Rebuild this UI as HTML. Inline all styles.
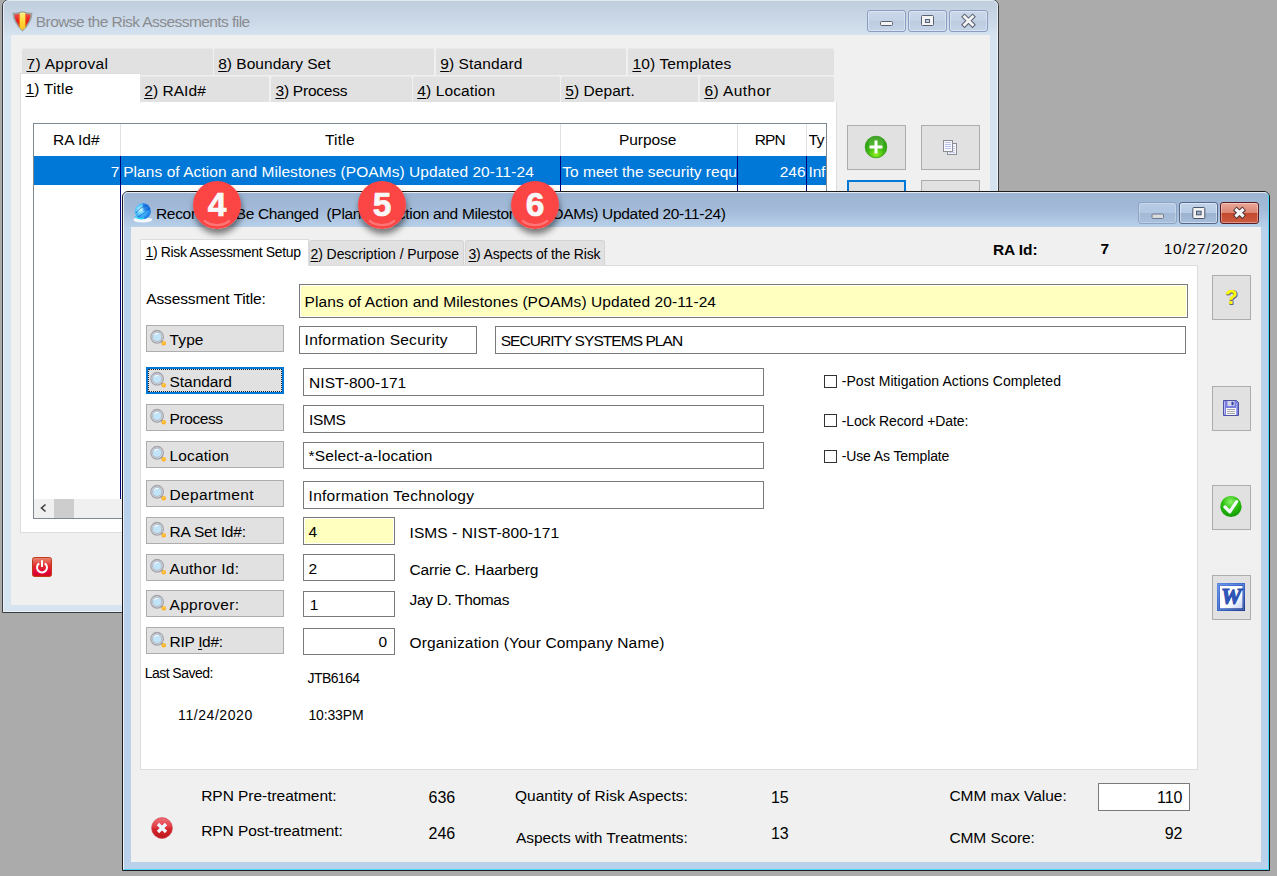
<!DOCTYPE html><html><head><meta charset="utf-8"><title>Risk Assessment</title><style>html,body{margin:0;padding:0}body{width:1277px;height:876px;overflow:hidden;background:#ababab;position:relative;font-family:'Liberation Sans', sans-serif}body div,body svg{position:absolute}.t{font-family:'Liberation Sans', sans-serif}u{text-decoration:underline;text-decoration-thickness:1px;text-underline-offset:2px}</style></head><body>
<div id="bw" style="left:2px;top:-1px;width:997px;height:614px;border:1px solid #3c3c3c;border-radius:7px 7px 0 0;box-sizing:border-box;background:#d6e3f1;overflow:hidden">
<div style="left:0;top:0;width:995px;height:36px;background:linear-gradient(#bfcddc 0%,#c7d5e4 45%,#d6e3f1 100%)"></div><div style="left:0;top:0;width:995px;height:612px;box-sizing:border-box;border:1px solid rgba(255,255,255,.55);border-radius:6px 6px 0 0"></div>
</div>
<div style="left:11px;top:35px;width:979px;height:570px;background:#f0f0f0"></div>
<svg style="left:12px;top:10.600px" width="21" height="21" viewBox="0 0 21 21"><defs><linearGradient id="sy" x1="0" y1="0" x2="0" y2="1"><stop offset="0" stop-color="#fff08a"/><stop offset=".5" stop-color="#ffd83a"/><stop offset="1" stop-color="#ffc020"/></linearGradient><linearGradient id="sr" x1="0" y1="0" x2="0" y2="1"><stop offset="0" stop-color="#f45a5a"/><stop offset=".5" stop-color="#e81818"/><stop offset="1" stop-color="#c80808"/></linearGradient></defs><path d="M1.5 2.5 Q6 2.8 10.5 1 Q15 2.8 19.5 2.5 Q19.5 11 10.5 19.5 Q1.5 11 1.5 2.5Z" fill="url(#sr)" stroke="#9aa3a0" stroke-width="1.700"/><path d="M7.5 2.2 Q9.5 1.8 10.5 1.2 Q11.5 1.8 13.5 2.2 L13.5 16.5 L10.5 19.3 L7.5 16.5Z" fill="url(#sy)"/><path d="M7.2 2.5V16" stroke="#f07010" stroke-width=".8"/><path d="M13.8 2.5V16" stroke="#f07010" stroke-width=".8"/></svg>
<div id="t0" class="t" style="top:12px;font-size:15.5px;line-height:20px;color:#8a8c90;white-space:nowrap;letter-spacing:-0.559px;left:35.80px;">Browse the Risk Assessments file</div>
<div style="left:867px;top:10px;width:39px;height:22px;box-sizing:border-box;border:1px solid #8a9cc0;border-radius:3px;background:linear-gradient(#cbd8ea 0%,#c4d2e6 48%,#bccbe0 52%,#c6d4e8 100%);box-shadow:inset 0 0 0 1px rgba(255,255,255,.35)"></div>
<div style="left:908px;top:10px;width:39px;height:22px;box-sizing:border-box;border:1px solid #8a9cc0;border-radius:3px;background:linear-gradient(#cbd8ea 0%,#c4d2e6 48%,#bccbe0 52%,#c6d4e8 100%);box-shadow:inset 0 0 0 1px rgba(255,255,255,.35)"></div>
<div style="left:949px;top:10px;width:39px;height:22px;box-sizing:border-box;border:1px solid #8a9cc0;border-radius:3px;background:linear-gradient(#cbd8ea 0%,#c4d2e6 48%,#bccbe0 52%,#c6d4e8 100%);box-shadow:inset 0 0 0 1px rgba(255,255,255,.35)"></div>
<svg style="left:867px;top:10px" width="121" height="22" viewBox="0 0 121 22"><rect x="13.5" y="11.5" width="12" height="4" rx="1" fill="#f4f4f4" stroke="#5a6170" stroke-width="1"/><rect x="54.500" y="5.5" width="12" height="10" rx="1" fill="#f4f4f4" stroke="#5a6170"/><rect x="58.5" y="9.5" width="4" height="3" fill="#c4d2e6" stroke="#5a6170"/><path d="M97.500 6.800 L105.500 14.800 M105.500 6.800 L97.500 14.800" stroke="#5a6170" stroke-width="4.8" stroke-linecap="square"/><path d="M97.500 6.800 L105.500 14.800 M105.500 6.800 L97.500 14.800" stroke="#f4f4f4" stroke-width="2.8" stroke-linecap="square"/></svg>
<div style="left:22px;top:48px;width:190.5px;height:27px;background:#e1e1e1;border-radius:3px 3px 0 0;box-shadow:inset 0 1px 0 #e8e8e8"></div>
<div id="t1" class="t" style="top:54px;font-size:15.5px;line-height:20px;color:#000;white-space:nowrap;letter-spacing:0.298px;left:26.50px;"><u>7</u>) Approval</div>
<div style="left:214px;top:48px;width:220.3px;height:27px;background:#e1e1e1;border-radius:3px 3px 0 0;box-shadow:inset 0 1px 0 #e8e8e8"></div>
<div id="t2" class="t" style="top:54px;font-size:15.5px;line-height:20px;color:#000;white-space:nowrap;letter-spacing:0.026px;left:218.20px;"><u>8</u>) Boundary Set</div>
<div style="left:436.2px;top:48px;width:190.3px;height:27px;background:#e1e1e1;border-radius:3px 3px 0 0;box-shadow:inset 0 1px 0 #e8e8e8"></div>
<div id="t3" class="t" style="top:54px;font-size:15.5px;line-height:20px;color:#000;white-space:nowrap;letter-spacing:0.108px;left:440.20px;"><u>9</u>) Standard</div>
<div style="left:628.2px;top:48px;width:206.3px;height:27px;background:#e1e1e1;border-radius:3px 3px 0 0;box-shadow:inset 0 1px 0 #e8e8e8"></div>
<div id="t4" class="t" style="top:54px;font-size:15.5px;line-height:20px;color:#000;white-space:nowrap;letter-spacing:0.152px;left:632.40px;"><u>1</u>0) Templates</div>
<div style="left:20px;top:102px;width:817px;height:431px;background:#fff;box-sizing:border-box;border:1px solid #dcdcdc;border-top:none"></div>
<div style="left:141px;top:75.5px;width:128.4px;height:26.5px;background:#e1e1e1;border-radius:3px 3px 0 0;box-shadow:inset 0 1px 0 #e8e8e8"></div>
<div id="t5" class="t" style="top:81px;font-size:15.5px;line-height:20px;color:#000;white-space:nowrap;letter-spacing:0.059px;left:144.20px;"><u>2</u>) RAId#</div>
<div style="left:270.8px;top:75.5px;width:140.8px;height:26.5px;background:#e1e1e1;border-radius:3px 3px 0 0;box-shadow:inset 0 1px 0 #e8e8e8"></div>
<div id="t6" class="t" style="top:81px;font-size:15.5px;line-height:20px;color:#000;white-space:nowrap;letter-spacing:-0.244px;left:275.50px;"><u>3</u>) Process</div>
<div style="left:413px;top:75.5px;width:146.5px;height:26.5px;background:#e1e1e1;border-radius:3px 3px 0 0;box-shadow:inset 0 1px 0 #e8e8e8"></div>
<div id="t7" class="t" style="top:81px;font-size:15.5px;line-height:20px;color:#000;white-space:nowrap;letter-spacing:0.130px;left:417.20px;"><u>4</u>) Location</div>
<div style="left:561.2px;top:75.5px;width:137.2px;height:26.5px;background:#e1e1e1;border-radius:3px 3px 0 0;box-shadow:inset 0 1px 0 #e8e8e8"></div>
<div id="t8" class="t" style="top:81px;font-size:15.5px;line-height:20px;color:#000;white-space:nowrap;letter-spacing:0.074px;left:565.20px;"><u>5</u>) Depart.</div>
<div style="left:700.4px;top:75.5px;width:134.1px;height:26.5px;background:#e1e1e1;border-radius:3px 3px 0 0;box-shadow:inset 0 1px 0 #e8e8e8"></div>
<div id="t9" class="t" style="top:81px;font-size:15.5px;line-height:20px;color:#000;white-space:nowrap;letter-spacing:0.449px;left:704.40px;"><u>6</u>) Author</div>
<div style="left:20px;top:73px;width:121px;height:30px;background:#fff;box-sizing:border-box;border:1px solid #dcdcdc;border-bottom:none;border-right-color:#e4e4e4"></div>
<div id="t10" class="t" style="top:79px;font-size:15.5px;line-height:20px;color:#000;white-space:nowrap;letter-spacing:0.181px;left:25.50px;"><u>1</u>) Title</div>
<div style="left:33px;top:123px;width:794px;height:396px;background:#fff;box-sizing:border-box;border:1px solid #7f8791"></div>
<div style="left:120px;top:124px;width:1px;height:32px;background:#e2e2e2"></div>
<div style="left:120px;top:156px;width:1px;height:343px;background:#00007a"></div>
<div style="left:560px;top:124px;width:1px;height:32px;background:#e2e2e2"></div>
<div style="left:560px;top:156px;width:1px;height:343px;background:#00007a"></div>
<div style="left:737px;top:124px;width:1px;height:32px;background:#e2e2e2"></div>
<div style="left:737px;top:156px;width:1px;height:343px;background:#00007a"></div>
<div style="left:806px;top:124px;width:1px;height:32px;background:#e2e2e2"></div>
<div style="left:806px;top:156px;width:1px;height:343px;background:#00007a"></div>
<div style="left:34px;top:156px;width:792px;height:29px;background:#0078d7"></div>
<div style="left:120px;top:156px;width:1px;height:29px;background:#00007a"></div>
<div style="left:560px;top:156px;width:1px;height:29px;background:#00007a"></div>
<div style="left:737px;top:156px;width:1px;height:29px;background:#00007a"></div>
<div style="left:806px;top:156px;width:1px;height:29px;background:#00007a"></div>
<div id="t11" class="t" style="top:130px;font-size:15.5px;line-height:20px;color:#000;white-space:nowrap;letter-spacing:-0.006px;left:53.10px;">RA Id#</div>
<div id="t12" class="t" style="top:130px;font-size:15.5px;line-height:20px;color:#000;white-space:nowrap;letter-spacing:0.245px;left:324.90px;">Title</div>
<div id="t13" class="t" style="top:130px;font-size:15.5px;line-height:20px;color:#000;white-space:nowrap;letter-spacing:-0.039px;left:618.90px;">Purpose</div>
<div id="t14" class="t" style="top:130px;font-size:15.5px;line-height:20px;color:#000;white-space:nowrap;letter-spacing:-0.917px;left:754.70px;">RPN</div>
<div id="t15" class="t" style="top:130px;font-size:15.5px;line-height:20px;color:#000;white-space:nowrap;left:808.60px;width:17.5px;overflow:hidden;letter-spacing:-.5px;">Ty</div>
<div id="t16" class="t" style="top:162px;font-size:15.5px;line-height:20px;color:#fff;white-space:nowrap;left:110.70px;">7</div>
<div id="t17" class="t" style="top:162px;font-size:15.5px;line-height:20px;color:#fff;white-space:nowrap;letter-spacing:0.062px;left:123.20px;">Plans of Action and Milestones (POAMs) Updated 20-11-24</div>
<div id="t18" class="t" style="top:162px;font-size:15.5px;line-height:20px;color:#fff;white-space:nowrap;letter-spacing:0.032px;left:562.20px;">To meet the security requ</div>
<div id="t19" class="t" style="top:162px;font-size:15.5px;line-height:20px;color:#fff;white-space:nowrap;right:471.40px;">246</div>
<div id="t20" class="t" style="top:162px;font-size:15.5px;line-height:20px;color:#fff;white-space:nowrap;left:808.60px;width:17.3px;overflow:hidden;letter-spacing:-.2px;">Inf</div>
<div style="left:34px;top:499px;width:792px;height:19px;background:#f0f0f0"></div>
<div style="left:54px;top:499px;width:20px;height:19px;background:#cdcdcd"></div>
<svg style="left:38px;top:502px" width="12" height="12" viewBox="0 0 12 12"><path d="M7.5 2.5 L3.500 6 L7.5 9.5" fill="none" stroke="#404040" stroke-width="1.6"/></svg>
<div style="left:847px;top:125px;width:59px;height:45px;box-sizing:border-box;border:1px solid #adadad;background:#e1e1e1"></div>
<div style="left:921px;top:125px;width:59px;height:45px;box-sizing:border-box;border:1px solid #adadad;background:#e1e1e1"></div>
<div style="left:847px;top:180px;width:59px;height:45px;box-sizing:border-box;border:2px solid #0078d7;background:#e1e1e1"></div>
<div style="left:921px;top:180px;width:59px;height:45px;box-sizing:border-box;border:1px solid #adadad;background:#e1e1e1"></div>
<svg style="left:864px;top:135px" width="24" height="24" viewBox="0 0 24 24"><defs><radialGradient id="gp" cx=".5" cy=".85" r=".9"><stop offset="0" stop-color="#8cf01c"/><stop offset=".45" stop-color="#3cb414"/><stop offset="1" stop-color="#2a9410"/></radialGradient></defs><circle cx="12" cy="12" r="10.800" fill="url(#gp)" stroke="#2e9a14" stroke-width=".8"/><ellipse cx="12" cy="7" rx="8" ry="5" fill="#fff" opacity=".12"/><path d="M12 5.500V18.500M5.500 12H18.500" stroke="#fff" stroke-width="3"/></svg>
<svg style="left:942px;top:139px" width="17" height="17" viewBox="0 0 17 17"><rect x="5.500" y="4.500" width="9" height="11" fill="#f4f6fc" stroke="#8c8c94"/><path d="M7 7.500h6M7 9.500h6M7 11.500h6M7 13.500h6" stroke="#c4ccf0"/><rect x="1.500" y="1.500" width="9" height="11" fill="#f8f9fe" stroke="#8c8c94"/><path d="M3 3.500h6M3 5.500h6M3 7.500h6M3 9.500h6" stroke="#b8c2ee"/></svg>
<svg style="left:32px;top:557px" width="20" height="20" viewBox="0 0 20 20"><defs><linearGradient id="pw" x1="0" y1="0" x2="0" y2="1"><stop offset="0" stop-color="#e88a72"/><stop offset=".45" stop-color="#e22a2c"/><stop offset=".85" stop-color="#e0003c"/><stop offset="1" stop-color="#c81808"/></linearGradient></defs><rect x=".5" y=".5" width="19" height="19" rx="2" fill="url(#pw)" stroke="#c43a18"/><path d="M7.200 6.300 A5 5 0 1 0 12.800 6.300" fill="none" stroke="#fff" stroke-width="2"/><path d="M10 3.300V10" stroke="#fff" stroke-width="2"/></svg>
<div id="fw" style="left:122px;top:191px;width:1148px;height:680px;border:1px solid #1c1c1c;border-radius:6px 6px 0 0;box-sizing:border-box;background:#b9d1ea;overflow:hidden;box-shadow:0 0 0 0 #000">
<div style="left:0;top:0;width:1146px;height:36px;background:linear-gradient(#9bb4d2 0%,#a3bbd8 50%,#b9d1ea 100%)"></div>
<div style="left:0;top:0;width:1146px;height:678px;box-sizing:border-box;border:1px solid rgba(255,255,255,.75);border-right-color:#4cd8f8;border-bottom-color:#4cd8f8;border-radius:5px 5px 0 0"></div>
</div>
<div style="left:131px;top:227px;width:1130px;height:635px;background:#f0f0f0"></div>
<svg style="left:132px;top:201px" width="22" height="23" viewBox="0 0 22 23"><defs><radialGradient id="gl" cx=".35" cy=".4" r=".7"><stop offset="0" stop-color="#d0fbff"/><stop offset=".4" stop-color="#58c8fc"/><stop offset="1" stop-color="#0c6ce4"/></radialGradient></defs><ellipse cx="10.800" cy="18.800" rx="9.500" ry="2.600" fill="#f4faff"/><circle cx="10.800" cy="10.300" r="8" fill="url(#gl)"/><path d="M10.800 2.300 A8 8 0 0 1 18.600 8.500 L11.500 10 Z" fill="#0858d8" opacity=".55"/><path d="M4 12 Q8 6 15 4.500 M6 16 Q12 13 17.500 7" stroke="#0848c0" stroke-width="1" fill="none" opacity=".6"/><path d="M3 15.500 Q7 19 12 17" stroke="#28d8f8" stroke-width="1.600" fill="none"/></svg>
<div id="t21" class="t" style="top:204px;font-size:15.5px;line-height:20px;color:#000;white-space:nowrap;letter-spacing:-0.325px;left:156.00px;white-space:pre;">Record Will Be Changed  (Plans of Action and Milestones (POAMs) Updated 20-11-24)</div>
<div style="left:1138px;top:202px;width:38.5px;height:21.6px;box-sizing:border-box;border:1px solid #8ea4c4;border-radius:3px;background:linear-gradient(#b6cbe5 0%,#b2c8e2 48%,#a3bad6 52%,#a9c0dc 100%);box-shadow:inset 0 0 0 1px rgba(255,255,255,.25)"></div>
<div style="left:1179px;top:202px;width:38.5px;height:21.6px;box-sizing:border-box;border:1px solid #56688a;border-radius:3px;background:linear-gradient(#c0d3ea 0%,#b8cce6 48%,#9cb3d0 52%,#a6bedb 100%);box-shadow:inset 0 0 0 1px rgba(255,255,255,.45)"></div>
<div style="left:1220px;top:202px;width:39px;height:21.6px;box-sizing:border-box;border:1px solid #5a1c24;border-radius:3px;background:linear-gradient(#eaa898 0%,#dc8674 48%,#c3482e 52%,#cc5c40 100%);box-shadow:inset 0 0 0 1px rgba(255,255,255,.35)"></div>
<svg style="left:1138px;top:202px" width="122" height="22" viewBox="0 0 122 22"><rect x="14" y="12" width="11.500" height="4.500" rx="1" fill="#dcdcdc" stroke="#6a7890" stroke-width="1"/><rect x="54.800" y="5.500" width="12" height="11" rx="1" fill="#f2f2f2" stroke="#4a5468"/><rect x="58.500" y="9.200" width="4.600" height="3.600" fill="#9cb3d0" stroke="#4a5468"/><path d="M96.800 6.500 L106.200 15.100 M106.200 6.500 L96.800 15.100" stroke="#4a3034" stroke-width="5.200" stroke-linecap="butt"/><path d="M97.400 7.050 L105.600 14.550 M105.600 7.050 L97.400 14.550" stroke="#f6f6f6" stroke-width="3.200" stroke-linecap="butt"/></svg>
<div id="t22" class="t" style="top:240px;font-size:15.5px;line-height:20px;color:#000;white-space:nowrap;letter-spacing:-0.092px;font-weight:bold;left:993.00px;">RA Id:</div>
<div id="t23" class="t" style="top:239px;font-size:15.5px;line-height:20px;color:#000;white-space:nowrap;font-weight:bold;left:1100.50px;">7</div>
<div id="t24" class="t" style="top:239px;font-size:15.5px;line-height:20px;color:#000;white-space:nowrap;letter-spacing:0.702px;left:1163.70px;">10/27/2020</div>
<div style="left:140px;top:265px;width:1058px;height:505px;background:#fff;box-sizing:border-box;border:1px solid #dcdcdc"></div>
<div style="left:308.5px;top:240.3px;width:155.0px;height:24.7px;background:#e1e1e1;box-sizing:border-box;border:1px solid #d4d4d4;border-bottom:none;border-radius:3px 3px 0 0"></div>
<div style="left:464.5px;top:240.3px;width:140.3px;height:24.7px;background:#e1e1e1;box-sizing:border-box;border:1px solid #d4d4d4;border-bottom:none;border-radius:3px 3px 0 0"></div>
<div style="left:140px;top:238.5px;width:169px;height:27.5px;background:#fff;box-sizing:border-box;border:1px solid #dcdcdc;border-bottom:none"></div>
<div id="t25" class="t" style="top:242px;font-size:14px;line-height:20px;color:#000;white-space:nowrap;letter-spacing:-0.340px;left:145.50px;"><u>1</u>) Risk Assessment Setup</div>
<div id="t26" class="t" style="top:244px;font-size:14px;line-height:20px;color:#000;white-space:nowrap;letter-spacing:-0.074px;left:310.50px;"><u>2</u>) Description / Purpose</div>
<div id="t27" class="t" style="top:244px;font-size:14px;line-height:20px;color:#000;white-space:nowrap;letter-spacing:-0.153px;left:468.40px;"><u>3</u>) Aspects of the Risk</div>
<div id="t28" class="t" style="top:289px;font-size:15.5px;line-height:20px;color:#000;white-space:nowrap;letter-spacing:-0.111px;left:146.20px;">Assessment Title:</div>
<div style="left:299px;top:284.3px;width:889.2px;height:33.4px;box-sizing:border-box;border:1px solid #7a7a7a;background:#ffffc0;box-shadow:inset 0 0 0 1px #fff"></div>
<div id="t29" class="t" style="top:292px;font-size:15.5px;line-height:20px;color:#000;white-space:nowrap;letter-spacing:0.077px;left:304.60px;">Plans of Action and Milestones (POAMs) Updated 20-11-24</div>
<div style="left:299px;top:326px;width:178px;height:27.6px;box-sizing:border-box;border:1px solid #7a7a7a;background:#fff"></div>
<div id="t30" class="t" style="top:330px;font-size:15.5px;line-height:20px;color:#000;white-space:nowrap;letter-spacing:0.266px;left:304.60px;">Information Security</div>
<div style="left:495px;top:326px;width:691.2px;height:27.6px;box-sizing:border-box;border:1px solid #7a7a7a;background:#fff"></div>
<div id="t31" class="t" style="top:331px;font-size:15.5px;line-height:20px;color:#000;white-space:nowrap;letter-spacing:-0.943px;left:500.70px;">SECURITY SYSTEMS PLAN</div>
<div style="left:145.8px;top:325.3px;width:138.2px;height:26.5px;box-sizing:border-box;border:1px solid #adadad;background:#e1e1e1"></div>
<svg style="left:149px;top:328.1px" width="18" height="18" viewBox="0 0 18 18"><circle cx="8.100" cy="8.800" r="6.300" fill="#d8dce2" stroke="#a4a4ac" stroke-width="1.300"/><circle cx="8.100" cy="8.800" r="4.600" fill="#c2e4f8" stroke="#b0b4bc" stroke-width=".9"/><path d="M5.500 7 Q7 4.800 9.500 5.500" stroke="#fff" stroke-width="1.200" fill="none" opacity=".8"/><path d="M12.200 13 L14.500 15.200" stroke="#9c9ca4" stroke-width="2.400"/><circle cx="14.700" cy="15.300" r="2.300" fill="#ffb020"/><circle cx="14.400" cy="14.800" r="1" fill="#ffd860"/></svg>
<div id="t32" class="t" style="top:330px;font-size:15.5px;line-height:20px;color:#000;white-space:nowrap;letter-spacing:0.097px;left:169.60px;">Type</div>
<div style="left:145.8px;top:366.8px;width:138.2px;height:27.0px;box-sizing:border-box;border:2px solid #0078d7;background:#e1e1e1"></div>
<div style="left:148px;top:369.0px;width:133.8px;height:22.6px;box-sizing:border-box;border:1px dotted #222"></div>
<svg style="left:149px;top:369.8px" width="18" height="18" viewBox="0 0 18 18"><circle cx="8.100" cy="8.800" r="6.300" fill="#d8dce2" stroke="#a4a4ac" stroke-width="1.300"/><circle cx="8.100" cy="8.800" r="4.600" fill="#c2e4f8" stroke="#b0b4bc" stroke-width=".9"/><path d="M5.500 7 Q7 4.800 9.500 5.500" stroke="#fff" stroke-width="1.200" fill="none" opacity=".8"/><path d="M12.200 13 L14.500 15.200" stroke="#9c9ca4" stroke-width="2.400"/><circle cx="14.700" cy="15.300" r="2.300" fill="#ffb020"/><circle cx="14.400" cy="14.800" r="1" fill="#ffd860"/></svg>
<div id="t33" class="t" style="top:372px;font-size:15.5px;line-height:20px;color:#000;white-space:nowrap;letter-spacing:-0.075px;left:169.60px;">Standard</div>
<div style="left:145.8px;top:404.4px;width:138.2px;height:26.4px;box-sizing:border-box;border:1px solid #adadad;background:#e1e1e1"></div>
<svg style="left:149px;top:407.1px" width="18" height="18" viewBox="0 0 18 18"><circle cx="8.100" cy="8.800" r="6.300" fill="#d8dce2" stroke="#a4a4ac" stroke-width="1.300"/><circle cx="8.100" cy="8.800" r="4.600" fill="#c2e4f8" stroke="#b0b4bc" stroke-width=".9"/><path d="M5.500 7 Q7 4.800 9.500 5.500" stroke="#fff" stroke-width="1.200" fill="none" opacity=".8"/><path d="M12.200 13 L14.500 15.200" stroke="#9c9ca4" stroke-width="2.400"/><circle cx="14.700" cy="15.300" r="2.300" fill="#ffb020"/><circle cx="14.400" cy="14.800" r="1" fill="#ffd860"/></svg>
<div id="t34" class="t" style="top:409px;font-size:15.5px;line-height:20px;color:#000;white-space:nowrap;letter-spacing:-0.433px;left:169.60px;">Process</div>
<div style="left:145.8px;top:441px;width:138.2px;height:26.8px;box-sizing:border-box;border:1px solid #adadad;background:#e1e1e1"></div>
<svg style="left:149px;top:443.9px" width="18" height="18" viewBox="0 0 18 18"><circle cx="8.100" cy="8.800" r="6.300" fill="#d8dce2" stroke="#a4a4ac" stroke-width="1.300"/><circle cx="8.100" cy="8.800" r="4.600" fill="#c2e4f8" stroke="#b0b4bc" stroke-width=".9"/><path d="M5.500 7 Q7 4.800 9.500 5.500" stroke="#fff" stroke-width="1.200" fill="none" opacity=".8"/><path d="M12.200 13 L14.500 15.200" stroke="#9c9ca4" stroke-width="2.400"/><circle cx="14.700" cy="15.300" r="2.300" fill="#ffb020"/><circle cx="14.400" cy="14.800" r="1" fill="#ffd860"/></svg>
<div id="t35" class="t" style="top:446px;font-size:15.5px;line-height:20px;color:#000;white-space:nowrap;letter-spacing:0.113px;left:169.60px;">Location</div>
<div style="left:145.8px;top:479.8px;width:138.2px;height:26.8px;box-sizing:border-box;border:1px solid #adadad;background:#e1e1e1"></div>
<svg style="left:149px;top:482.7px" width="18" height="18" viewBox="0 0 18 18"><circle cx="8.100" cy="8.800" r="6.300" fill="#d8dce2" stroke="#a4a4ac" stroke-width="1.300"/><circle cx="8.100" cy="8.800" r="4.600" fill="#c2e4f8" stroke="#b0b4bc" stroke-width=".9"/><path d="M5.500 7 Q7 4.800 9.500 5.500" stroke="#fff" stroke-width="1.200" fill="none" opacity=".8"/><path d="M12.200 13 L14.500 15.200" stroke="#9c9ca4" stroke-width="2.400"/><circle cx="14.700" cy="15.300" r="2.300" fill="#ffb020"/><circle cx="14.400" cy="14.800" r="1" fill="#ffd860"/></svg>
<div id="t36" class="t" style="top:485px;font-size:15.5px;line-height:20px;color:#000;white-space:nowrap;letter-spacing:0.324px;left:169.60px;">Department</div>
<div style="left:145.8px;top:516.8px;width:138.2px;height:27.0px;box-sizing:border-box;border:1px solid #adadad;background:#e1e1e1"></div>
<svg style="left:149px;top:519.8px" width="18" height="18" viewBox="0 0 18 18"><circle cx="8.100" cy="8.800" r="6.300" fill="#d8dce2" stroke="#a4a4ac" stroke-width="1.300"/><circle cx="8.100" cy="8.800" r="4.600" fill="#c2e4f8" stroke="#b0b4bc" stroke-width=".9"/><path d="M5.500 7 Q7 4.800 9.500 5.500" stroke="#fff" stroke-width="1.200" fill="none" opacity=".8"/><path d="M12.200 13 L14.500 15.200" stroke="#9c9ca4" stroke-width="2.400"/><circle cx="14.700" cy="15.300" r="2.300" fill="#ffb020"/><circle cx="14.400" cy="14.800" r="1" fill="#ffd860"/></svg>
<div id="t37" class="t" style="top:522px;font-size:15.5px;line-height:20px;color:#000;white-space:nowrap;letter-spacing:-0.202px;left:169.60px;">RA Set Id#:</div>
<div style="left:145.8px;top:553.9px;width:138.2px;height:26.9px;box-sizing:border-box;border:1px solid #adadad;background:#e1e1e1"></div>
<svg style="left:149px;top:556.8px" width="18" height="18" viewBox="0 0 18 18"><circle cx="8.100" cy="8.800" r="6.300" fill="#d8dce2" stroke="#a4a4ac" stroke-width="1.300"/><circle cx="8.100" cy="8.800" r="4.600" fill="#c2e4f8" stroke="#b0b4bc" stroke-width=".9"/><path d="M5.500 7 Q7 4.800 9.500 5.500" stroke="#fff" stroke-width="1.200" fill="none" opacity=".8"/><path d="M12.200 13 L14.500 15.200" stroke="#9c9ca4" stroke-width="2.400"/><circle cx="14.700" cy="15.300" r="2.300" fill="#ffb020"/><circle cx="14.400" cy="14.800" r="1" fill="#ffd860"/></svg>
<div id="t38" class="t" style="top:559px;font-size:15.5px;line-height:20px;color:#000;white-space:nowrap;letter-spacing:0.242px;left:169.60px;">Author Id:</div>
<div style="left:145.8px;top:590.2px;width:138.2px;height:26.4px;box-sizing:border-box;border:1px solid #adadad;background:#e1e1e1"></div>
<svg style="left:149px;top:592.9px" width="18" height="18" viewBox="0 0 18 18"><circle cx="8.100" cy="8.800" r="6.300" fill="#d8dce2" stroke="#a4a4ac" stroke-width="1.300"/><circle cx="8.100" cy="8.800" r="4.600" fill="#c2e4f8" stroke="#b0b4bc" stroke-width=".9"/><path d="M5.500 7 Q7 4.800 9.500 5.500" stroke="#fff" stroke-width="1.200" fill="none" opacity=".8"/><path d="M12.200 13 L14.500 15.200" stroke="#9c9ca4" stroke-width="2.400"/><circle cx="14.700" cy="15.300" r="2.300" fill="#ffb020"/><circle cx="14.400" cy="14.800" r="1" fill="#ffd860"/></svg>
<div id="t39" class="t" style="top:595px;font-size:15.5px;line-height:20px;color:#000;white-space:nowrap;letter-spacing:0.275px;left:169.60px;">Approver:</div>
<div style="left:145.8px;top:627px;width:138.2px;height:26.7px;box-sizing:border-box;border:1px solid #adadad;background:#e1e1e1"></div>
<svg style="left:149px;top:629.9px" width="18" height="18" viewBox="0 0 18 18"><circle cx="8.100" cy="8.800" r="6.300" fill="#d8dce2" stroke="#a4a4ac" stroke-width="1.300"/><circle cx="8.100" cy="8.800" r="4.600" fill="#c2e4f8" stroke="#b0b4bc" stroke-width=".9"/><path d="M5.500 7 Q7 4.800 9.500 5.500" stroke="#fff" stroke-width="1.200" fill="none" opacity=".8"/><path d="M12.200 13 L14.500 15.200" stroke="#9c9ca4" stroke-width="2.400"/><circle cx="14.700" cy="15.300" r="2.300" fill="#ffb020"/><circle cx="14.400" cy="14.800" r="1" fill="#ffd860"/></svg>
<div id="t40" class="t" style="top:632px;font-size:15.5px;line-height:20px;color:#000;white-space:nowrap;letter-spacing:-0.336px;left:169.60px;">RIP <u>I</u>d#:</div>
<div style="left:303px;top:368.2px;width:461px;height:27.4px;box-sizing:border-box;border:1px solid #7a7a7a;background:#fff"></div>
<div id="t41" class="t" style="top:373px;font-size:15.5px;line-height:20px;color:#000;white-space:nowrap;letter-spacing:0.064px;left:309.00px;">NIST-800-171</div>
<div style="left:303px;top:405px;width:461px;height:27.7px;box-sizing:border-box;border:1px solid #7a7a7a;background:#fff"></div>
<div id="t42" class="t" style="top:410px;font-size:15.5px;line-height:20px;color:#000;white-space:nowrap;letter-spacing:-0.335px;left:309.00px;">ISMS</div>
<div style="left:303px;top:441.5px;width:461px;height:27.5px;box-sizing:border-box;border:1px solid #7a7a7a;background:#fff"></div>
<div id="t43" class="t" style="top:446px;font-size:15.5px;line-height:20px;color:#000;white-space:nowrap;letter-spacing:0.142px;left:308.60px;">*Select-a-location</div>
<div style="left:303px;top:481px;width:461px;height:27.5px;box-sizing:border-box;border:1px solid #7a7a7a;background:#fff"></div>
<div id="t44" class="t" style="top:486px;font-size:15.5px;line-height:20px;color:#000;white-space:nowrap;letter-spacing:0.258px;left:308.60px;">Information Technology</div>
<div style="left:303px;top:517px;width:92px;height:27.7px;box-sizing:border-box;border:1px solid #7a7a7a;background:#ffffc0;box-shadow:inset 0 0 0 1px #fff"></div>
<div id="t45" class="t" style="top:522px;font-size:15.5px;line-height:20px;color:#000;white-space:nowrap;left:308.60px;">4</div>
<div style="left:303px;top:554.3px;width:92px;height:27.2px;box-sizing:border-box;border:1px solid #7a7a7a;background:#fff"></div>
<div id="t46" class="t" style="top:559px;font-size:15.5px;line-height:20px;color:#000;white-space:nowrap;left:308.60px;">2</div>
<div style="left:303px;top:591px;width:92px;height:25.6px;box-sizing:border-box;border:1px solid #7a7a7a;background:#fff"></div>
<div id="t47" class="t" style="top:595px;font-size:15.5px;line-height:20px;color:#000;white-space:nowrap;left:309.70px;">1</div>
<div style="left:303px;top:627.8px;width:92px;height:27.7px;box-sizing:border-box;border:1px solid #7a7a7a;background:#fff"></div>
<div id="t48" class="t" style="top:632px;font-size:15.5px;line-height:20px;color:#000;white-space:nowrap;right:890.00px;">0</div>
<div id="t49" class="t" style="top:523px;font-size:15.5px;line-height:20px;color:#000;white-space:nowrap;letter-spacing:0.079px;left:409.50px;">ISMS - NIST-800-171</div>
<div id="t50" class="t" style="top:560px;font-size:15.5px;line-height:20px;color:#000;white-space:nowrap;letter-spacing:-0.120px;left:409.50px;">Carrie C. Haarberg</div>
<div id="t51" class="t" style="top:590px;font-size:15.5px;line-height:20px;color:#000;white-space:nowrap;letter-spacing:-0.338px;left:409.50px;">Jay D. Thomas</div>
<div id="t52" class="t" style="top:633px;font-size:15.5px;line-height:20px;color:#000;white-space:nowrap;letter-spacing:0.154px;left:409.50px;">Organization (Your Company Name)</div>
<div id="t53" class="t" style="top:663px;font-size:14px;line-height:20px;color:#000;white-space:nowrap;letter-spacing:-0.534px;left:144.70px;">Last Saved:</div>
<div id="t54" class="t" style="top:668px;font-size:14px;line-height:20px;color:#000;white-space:nowrap;letter-spacing:-0.608px;left:307.60px;">JTB6164</div>
<div id="t55" class="t" style="top:705px;font-size:14px;line-height:20px;color:#000;white-space:nowrap;letter-spacing:0.563px;left:178.10px;">11/24/2020</div>
<div id="t56" class="t" style="top:705px;font-size:14px;line-height:20px;color:#000;white-space:nowrap;letter-spacing:-0.141px;left:308.40px;">10:33PM</div>
<div style="left:824px;top:374.5px;width:13px;height:13.0px;box-sizing:border-box;border:1px solid #333;background:#fff"></div>
<div id="t57" class="t" style="top:371px;font-size:14px;line-height:20px;color:#000;white-space:nowrap;letter-spacing:0.066px;left:841.70px;">-Post Mitigation Actions Completed</div>
<div style="left:824px;top:414.4px;width:13px;height:13.0px;box-sizing:border-box;border:1px solid #333;background:#fff"></div>
<div id="t58" class="t" style="top:411px;font-size:14px;line-height:20px;color:#000;white-space:nowrap;letter-spacing:-0.122px;left:841.70px;">-Lock Record +Date:</div>
<div style="left:824px;top:450.4px;width:13px;height:13.0px;box-sizing:border-box;border:1px solid #333;background:#fff"></div>
<div id="t59" class="t" style="top:446px;font-size:14px;line-height:20px;color:#000;white-space:nowrap;letter-spacing:-0.118px;left:841.70px;">-Use As Template</div>
<div style="left:1212px;top:275.3px;width:39px;height:44.5px;box-sizing:border-box;border:1px solid #adadad;background:#e1e1e1"></div>
<div style="left:1212px;top:386.2px;width:39px;height:44.5px;box-sizing:border-box;border:1px solid #adadad;background:#e1e1e1"></div>
<div style="left:1212px;top:485.3px;width:39px;height:44.5px;box-sizing:border-box;border:1px solid #adadad;background:#e1e1e1"></div>
<div style="left:1212px;top:575.3px;width:39px;height:44.5px;box-sizing:border-box;border:1px solid #adadad;background:#e1e1e1"></div>
<div class="t" style="left:1225.200px;top:284.500px;font-size:20px;line-height:24px;font-weight:bold;color:#ffff00;text-shadow:1px 1px 0 #666670,0 1px 0 #666670,1px 0 0 #666670">?</div>
<svg style="left:1223px;top:400px" width="16" height="16" viewBox="0 0 16 16"><path d="M.5 .5H13.500L15.500 2.500V15.500H.5Z" fill="#7a7ede" stroke="#4e52a4"/><path d="M1.500 1.500V14.500" stroke="#b8bcf8" stroke-width="1"/><path d="M13.500 3V14.500" stroke="#a0a4ec" stroke-width="1"/><rect x="4.500" y="1" width="7" height="5" fill="#d4d6ea"/><rect x="8.500" y="1.800" width="2" height="3.400" fill="#2c3c9c"/><rect x="3" y="8" width="10" height="7" fill="#fafafa"/><path d="M4 9.500h8M4 11.500h8M4 13.500h8" stroke="#a4a4ac" stroke-width="1"/></svg>
<svg style="left:1219px;top:495px" width="24" height="24" viewBox="0 0 24 24"><defs><radialGradient id="gc" cx=".48" cy=".28" r=".75"><stop offset="0" stop-color="#8cf468"/><stop offset=".5" stop-color="#2cc010"/><stop offset="1" stop-color="#0c9400"/></radialGradient></defs><circle cx="12" cy="11.500" r="10.600" fill="url(#gc)"/><path d="M6 12 L10.800 16.800 L17.600 6.600" fill="none" stroke="#f4f8ff" stroke-width="3.200" stroke-linecap="round" stroke-linejoin="round"/></svg>
<svg style="left:1217px;top:583px" width="28" height="28" viewBox="0 0 28 28"><defs><linearGradient id="wf" x1="0" y1="0" x2="1" y2="1"><stop offset="0" stop-color="#5c88e4"/><stop offset=".5" stop-color="#3460c4"/><stop offset="1" stop-color="#0c2878"/></linearGradient><linearGradient id="wp" x1="0" y1="0" x2="1" y2="1"><stop offset="0" stop-color="#fff"/><stop offset=".6" stop-color="#fff"/><stop offset="1" stop-color="#c8d4f4"/></linearGradient></defs><rect width="28" height="28" fill="url(#wf)"/><rect x="1.200" y="1.200" width="25.600" height="25.600" fill="none" stroke="#86a8f0" stroke-width=".8" opacity=".7"/><rect x="3" y="3" width="22.500" height="22.300" fill="url(#wp)"/><text x="14.300" y="21.200" text-anchor="middle" font-family="'Liberation Serif',serif" font-weight="bold" font-style="italic" font-size="23" fill="#3058bc" stroke="#2c50b0" stroke-width="1.100" textLength="20.500" lengthAdjust="spacingAndGlyphs">W</text></svg>
<div id="t60" class="t" style="top:786px;font-size:15.5px;line-height:20px;color:#000;white-space:nowrap;letter-spacing:-0.042px;left:201.20px;">RPN Pre-treatment:</div>
<div id="t61" class="t" style="top:821px;font-size:15.5px;line-height:20px;color:#000;white-space:nowrap;letter-spacing:-0.072px;left:201.20px;">RPN Post-treatment:</div>
<div id="t62" class="t" style="top:788px;font-size:16px;line-height:20px;color:#000;white-space:nowrap;left:428.50px;">636</div>
<div id="t63" class="t" style="top:824px;font-size:16px;line-height:20px;color:#000;white-space:nowrap;left:428.50px;">246</div>
<div id="t64" class="t" style="top:786px;font-size:15.5px;line-height:20px;color:#000;white-space:nowrap;letter-spacing:0.021px;left:515.00px;">Quantity of Risk Aspects:</div>
<div id="t65" class="t" style="top:828px;font-size:15.5px;line-height:20px;color:#000;white-space:nowrap;letter-spacing:-0.059px;left:516.00px;">Aspects with Treatments:</div>
<div id="t66" class="t" style="top:788px;font-size:16px;line-height:20px;color:#000;white-space:nowrap;left:770.90px;">15</div>
<div id="t67" class="t" style="top:824px;font-size:16px;line-height:20px;color:#000;white-space:nowrap;left:770.90px;">13</div>
<div id="t68" class="t" style="top:786px;font-size:15.5px;line-height:20px;color:#000;white-space:nowrap;letter-spacing:-0.025px;left:949.40px;">CMM max Value:</div>
<div id="t69" class="t" style="top:828px;font-size:15.5px;line-height:20px;color:#000;white-space:nowrap;letter-spacing:-0.069px;left:949.40px;">CMM Score:</div>
<div style="left:1097.8px;top:783px;width:92.2px;height:28px;box-sizing:border-box;border:1px solid #7a7a7a;background:#fff"></div>
<div id="t70" class="t" style="top:788px;font-size:16px;line-height:20px;color:#000;white-space:nowrap;right:94.50px;">110</div>
<div id="t71" class="t" style="top:824px;font-size:16px;line-height:20px;color:#000;white-space:nowrap;right:94.50px;">92</div>
<svg style="left:151px;top:816.500px" width="22" height="22" viewBox="0 0 22 22"><defs><linearGradient id="rx" x1="0" y1="0" x2="0" y2="1"><stop offset="0" stop-color="#f0707a"/><stop offset=".45" stop-color="#e23c44"/><stop offset=".55" stop-color="#d4242c"/><stop offset="1" stop-color="#bc181c"/></linearGradient></defs><circle cx="11" cy="11" r="10.400" fill="url(#rx)" stroke="#c8343c" stroke-width=".6"/><path d="M7 7 L15 15 M15 7 L7 15" stroke="#eef6ff" stroke-width="3.300" stroke-linecap="butt"/></svg>
<div style="left:193.2px;top:181px;width:48px;height:48px;border-radius:50%;background:radial-gradient(circle at 50% 45%,#fc4646 0%,#fb4444 80%,#e63c3e 100%);box-shadow:1px 5px 6px rgba(0,0,0,.5);overflow:hidden"><svg style="left:0;top:0" width="48" height="48" viewBox="0 0 48 48"><path d="M11.800 40 A20.300 20.300 0 0 0 36.200 40" fill="none" stroke="#ff8686" stroke-opacity=".75" stroke-width="2.200" stroke-linecap="round"/></svg></div>
<div class="t" style="left:193.2px;top:181px;width:48px;height:48px;line-height:48px;text-align:center;font-size:33.500px;font-weight:bold;color:#f8f8f8;-webkit-text-stroke:.7px #f8f8f8">4</div>
<div style="left:358.2px;top:180.5px;width:48px;height:48px;border-radius:50%;background:radial-gradient(circle at 50% 45%,#fc4646 0%,#fb4444 80%,#e63c3e 100%);box-shadow:1px 5px 6px rgba(0,0,0,.5);overflow:hidden"><svg style="left:0;top:0" width="48" height="48" viewBox="0 0 48 48"><path d="M11.800 40 A20.300 20.300 0 0 0 36.200 40" fill="none" stroke="#ff8686" stroke-opacity=".75" stroke-width="2.200" stroke-linecap="round"/></svg></div>
<div class="t" style="left:358.2px;top:180.5px;width:48px;height:48px;line-height:48px;text-align:center;font-size:33.500px;font-weight:bold;color:#f8f8f8;-webkit-text-stroke:.7px #f8f8f8">5</div>
<div style="left:511px;top:180.5px;width:48px;height:48px;border-radius:50%;background:radial-gradient(circle at 50% 45%,#fc4646 0%,#fb4444 80%,#e63c3e 100%);box-shadow:1px 5px 6px rgba(0,0,0,.5);overflow:hidden"><svg style="left:0;top:0" width="48" height="48" viewBox="0 0 48 48"><path d="M11.800 40 A20.300 20.300 0 0 0 36.200 40" fill="none" stroke="#ff8686" stroke-opacity=".75" stroke-width="2.200" stroke-linecap="round"/></svg></div>
<div class="t" style="left:511px;top:180.5px;width:48px;height:48px;line-height:48px;text-align:center;font-size:33.500px;font-weight:bold;color:#f8f8f8;-webkit-text-stroke:.7px #f8f8f8">6</div>
</body></html>
